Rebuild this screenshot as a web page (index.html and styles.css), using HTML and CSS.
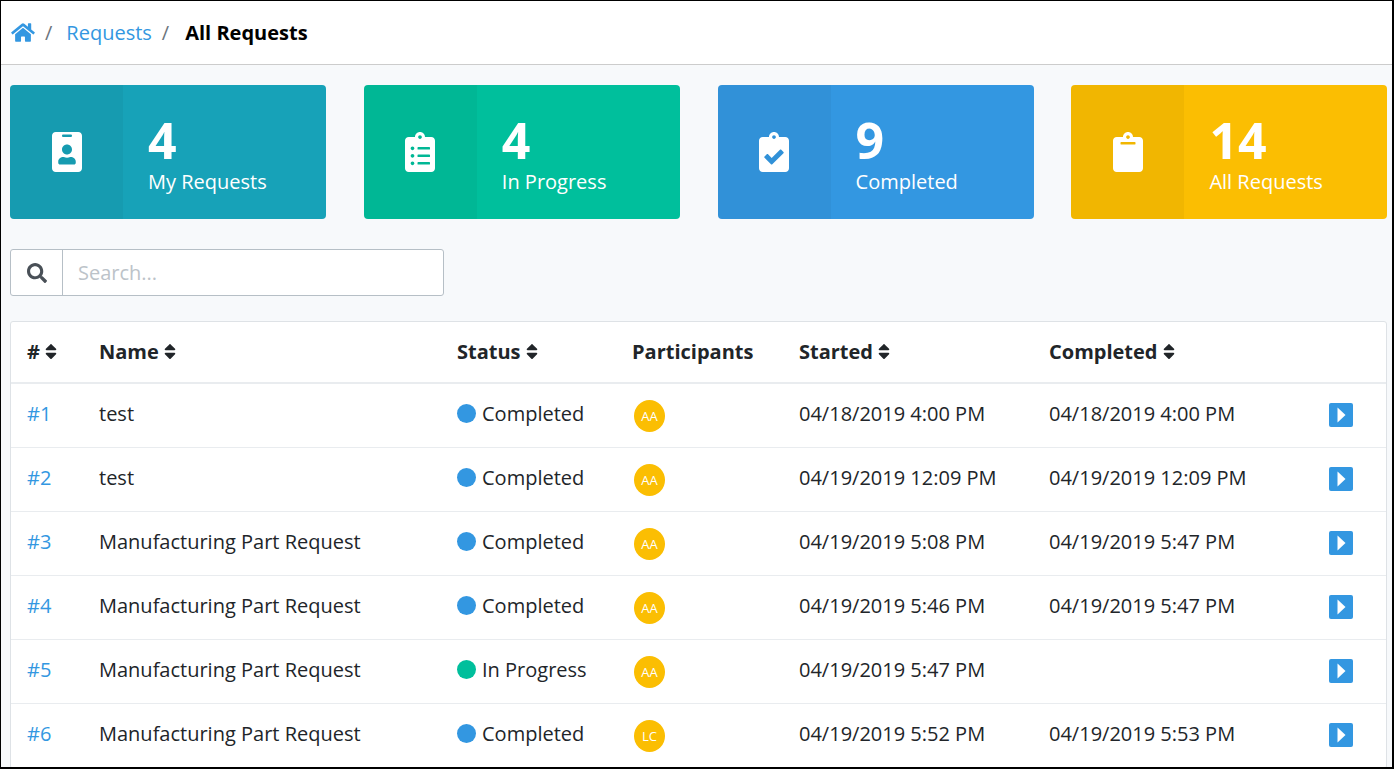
FILE: index.html
```html
<!DOCTYPE html>
<html>
<head>
    <meta charset="UTF-8">
    <title>All Requests</title>
    <link rel="stylesheet" href="styles.css">
</head>
<body>
<svg class="sprites" xmlns="http://www.w3.org/2000/svg">
    <symbol id="sort" viewBox="0 0 320 512"><path d="M41 288h238c21.4 0 32.1 25.9 17 41L177 448c-9.4 9.4-24.6 9.4-33.9 0L24 329c-15.1-15.1-4.4-41 17-41zm255-105L177 64c-9.4-9.4-24.6-9.4-33.9 0L24 183c-15.1 15.1-4.4 41 17 41h238c21.4 0 32.1-25.9 17-41z"/></symbol>
    <symbol id="play" viewBox="0 0 24 24"><rect width="24" height="24" rx="2" fill="#3397e1"/><path d="M8.500 4.500v15l8-7.500z" fill="#fff"/></symbol>
</svg>
<div class="frame">
    <nav class="crumbs">
        <svg class="home" viewBox="0 0 576 512"><path d="M280.37 148.26L96 300.11V464a16 16 0 0 0 16 16l112.06-.29a16 16 0 0 0 15.92-16V368a16 16 0 0 1 16-16h64a16 16 0 0 1 16 16v95.64a16 16 0 0 0 16 16.05L464 480a16 16 0 0 0 16-16V300L295.67 148.26a12.19 12.19 0 0 0-15.3 0zM571.6 251.47L488 182.56V44.05a12 12 0 0 0-12-12h-56a12 12 0 0 0-12 12v72.61L318.47 43a48 48 0 0 0-61 0L4.34 251.47a12 12 0 0 0-1.6 16.9l25.5 31A12 12 0 0 0 45.15 301l235.22-193.74a12.19 12.19 0 0 1 15.3 0L530.9 301a12 12 0 0 0 16.9-1.6l25.5-31a12 12 0 0 0-1.7-16.93z"/></svg>
        <span class="sep">/</span>
        <a class="crumb-link">Requests</a>
        <span class="sep">/</span>
        <strong class="crumb-now">All Requests</strong>
    </nav>

    <main class="content">
        <section class="cards">
            <div class="card card-teal">
                <div class="card-icon">
                    <svg viewBox="0 0 384 512"><path d="M336 0H48C21.5 0 0 21.500 0 48v416c0 26.500 21.500 48 48 48h288c26.500 0 48-21.500 48-48V48c0-26.500-21.500-48-48-48zM144 32h96c8.800 0 16 7.200 16 16s-7.200 16-16 16h-96c-8.800 0-16-7.200-16-16s7.200-16 16-16zm48 128c35.300 0 64 28.700 64 64s-28.700 64-64 64-64-28.700-64-64 28.700-64 64-64zm112 236.800c0 10.600-10 19.200-22.400 19.200H102.400C90 416 80 407.400 80 396.800v-19.200c0-31.800 30.100-57.600 67.200-57.600h5c12.300 5.100 25.700 8 39.800 8s27.600-2.900 39.800-8h5c37.100 0 67.200 25.800 67.200 57.600v19.200z"/></svg>
                </div>
                <div class="card-text"><b>4</b><span>My Requests</span></div>
            </div>
            <div class="card card-green">
                <div class="card-icon">
                    <svg viewBox="0 0 384 512"><path d="M336 64h-80c0-35.300-28.700-64-64-64s-64 28.700-64 64H48C21.500 64 0 85.500 0 112v352c0 26.500 21.500 48 48 48h288c26.500 0 48-21.500 48-48V112c0-26.500-21.500-48-48-48zM96 424c-13.300 0-24-10.700-24-24s10.700-24 24-24 24 10.700 24 24-10.700 24-24 24zm0-96c-13.300 0-24-10.700-24-24s10.700-24 24-24 24 10.700 24 24-10.700 24-24 24zm0-96c-13.300 0-24-10.700-24-24s10.700-24 24-24 24 10.700 24 24-10.700 24-24 24zm96-192c13.300 0 24 10.700 24 24s-10.700 24-24 24-24-10.700-24-24 10.700-24 24-24zm128 368c0 4.400-3.600 8-8 8H168c-4.400 0-8-3.600-8-8v-16c0-4.400 3.600-8 8-8h144c4.400 0 8 3.600 8 8v16zm0-96c0 4.400-3.600 8-8 8H168c-4.400 0-8-3.600-8-8v-16c0-4.400 3.600-8 8-8h144c4.400 0 8 3.600 8 8v16zm0-96c0 4.400-3.600 8-8 8H168c-4.400 0-8-3.600-8-8v-16c0-4.400 3.600-8 8-8h144c4.400 0 8 3.600 8 8v16z"/></svg>
                </div>
                <div class="card-text"><b>4</b><span>In Progress</span></div>
            </div>
            <div class="card card-blue">
                <div class="card-icon">
                    <svg viewBox="0 0 384 512"><path d="M336 64h-80c0-35.300-28.700-64-64-64s-64 28.700-64 64H48C21.500 64 0 85.500 0 112v352c0 26.500 21.500 48 48 48h288c26.500 0 48-21.500 48-48V112c0-26.500-21.500-48-48-48zM192 40c13.300 0 24 10.700 24 24s-10.700 24-24 24-24-10.700-24-24 10.700-24 24-24zm121.200 231.800l-143 141.800c-4.700 4.700-12.300 4.600-17-.1l-82.600-83.300c-4.700-4.700-4.600-12.300.1-17L99.100 285c4.700-4.700 12.300-4.600 17 .1l46 46.400 106-105.200c4.700-4.700 12.300-4.600 17 .1l28.200 28.400c4.700 4.800 4.600 12.300-.1 17z"/></svg>
                </div>
                <div class="card-text"><b>9</b><span>Completed</span></div>
            </div>
            <div class="card card-yellow">
                <div class="card-icon">
                    <svg viewBox="0 0 384 512"><path d="M384 112v352c0 26.510-21.490 48-48 48H48c-26.510 0-48-21.490-48-48V112c0-26.510 21.490-48 48-48h80c0-35.290 28.710-64 64-64s64 28.710 64 64h80c26.510 0 48 21.490 48 48zM192 40c-13.255 0-24 10.745-24 24s10.745 24 24 24 24-10.745 24-24-10.745-24-24-24m96 114v-20a6 6 0 0 0-6-6H102a6 6 0 0 0-6 6v20a6 6 0 0 0 6 6h180a6 6 0 0 0 6-6z"/></svg>
                </div>
                <div class="card-text"><b>14</b><span>All Requests</span></div>
            </div>
        </section>

        <div class="search">
            <div class="search-icon">
                <svg viewBox="0 0 512 512"><path d="M505 442.700L405.300 343c-4.500-4.500-10.600-7-17-7H372c27.600-35.300 44-79.700 44-128C416 93.100 322.900 0 208 0S0 93.100 0 208s93.100 208 208 208c48.300 0 92.700-16.400 128-44v16.300c0 6.400 2.500 12.500 7 17l99.700 99.700c9.400 9.400 24.600 9.400 33.900 0l28.300-28.300c9.400-9.400 9.400-24.600.1-34zM208 336c-70.700 0-128-57.200-128-128 0-70.700 57.200-128 128-128 70.700 0 128 57.200 128 128 0 70.700-57.200 128-128 128z"/></svg>
            </div>
            <input class="search-input" type="text" placeholder="Search...">
        </div>

        <div class="table-card">
            <table class="requests">
                <colgroup>
                    <col class="col-id"><col class="col-name"><col class="col-status"><col class="col-part"><col class="col-start"><col class="col-end"><col class="col-act">
                </colgroup>
                <tr>
                    <th># <svg class="sort"><use href="#sort"/></svg></th>
                    <th>Name <svg class="sort"><use href="#sort"/></svg></th>
                    <th>Status <svg class="sort"><use href="#sort"/></svg></th>
                    <th>Participants</th>
                    <th>Started <svg class="sort"><use href="#sort"/></svg></th>
                    <th>Completed <svg class="sort"><use href="#sort"/></svg></th>
                    <th></th>
                </tr>
                <tr>
                    <td><a class="req-link">#1</a></td>
                    <td>test</td>
                    <td><span class="dot dot-blue"></span>Completed</td>
                    <td><span class="avatar">AA</span></td>
                    <td>04/18/2019 4:00 PM</td>
                    <td>04/18/2019 4:00 PM</td>
                    <td><svg class="open"><use href="#play"/></svg></td>
                </tr>
                <tr>
                    <td><a class="req-link">#2</a></td>
                    <td>test</td>
                    <td><span class="dot dot-blue"></span>Completed</td>
                    <td><span class="avatar">AA</span></td>
                    <td>04/19/2019 12:09 PM</td>
                    <td>04/19/2019 12:09 PM</td>
                    <td><svg class="open"><use href="#play"/></svg></td>
                </tr>
                <tr>
                    <td><a class="req-link">#3</a></td>
                    <td>Manufacturing Part Request</td>
                    <td><span class="dot dot-blue"></span>Completed</td>
                    <td><span class="avatar">AA</span></td>
                    <td>04/19/2019 5:08 PM</td>
                    <td>04/19/2019 5:47 PM</td>
                    <td><svg class="open"><use href="#play"/></svg></td>
                </tr>
                <tr>
                    <td><a class="req-link">#4</a></td>
                    <td>Manufacturing Part Request</td>
                    <td><span class="dot dot-blue"></span>Completed</td>
                    <td><span class="avatar">AA</span></td>
                    <td>04/19/2019 5:46 PM</td>
                    <td>04/19/2019 5:47 PM</td>
                    <td><svg class="open"><use href="#play"/></svg></td>
                </tr>
                <tr>
                    <td><a class="req-link">#5</a></td>
                    <td>Manufacturing Part Request</td>
                    <td><span class="dot dot-green"></span>In Progress</td>
                    <td><span class="avatar">AA</span></td>
                    <td>04/19/2019 5:47 PM</td>
                    <td></td>
                    <td><svg class="open"><use href="#play"/></svg></td>
                </tr>
                <tr>
                    <td><a class="req-link">#6</a></td>
                    <td>Manufacturing Part Request</td>
                    <td><span class="dot dot-blue"></span>Completed</td>
                    <td><span class="avatar">LC</span></td>
                    <td>04/19/2019 5:52 PM</td>
                    <td>04/19/2019 5:53 PM</td>
                    <td><svg class="open"><use href="#play"/></svg></td>
                </tr>
            </table>
        </div>
    </main>
</div>
</body>
</html>
```

FILE: styles.css
```css
* {
    box-sizing: border-box;
}

html, body {
    margin: 0;
    height: 100%;
    overflow: hidden;
}

body {
    font-family: "Open Sans", sans-serif;
    font-size: 20px;
    color: #212529;
    background: #fff;
}

.sprites {
    display: none;
}

.frame {
    height: 769px;
    border: solid #000;
    border-width: 1px 2px 2px 1px;
    overflow: hidden;
    background: #f7f9fb;
}

/* breadcrumb bar */
.crumbs {
    height: 64px;
    padding-left: 10px;
    display: flex;
    align-items: center;
    background: #fff;
    border-bottom: 1px solid #ccc;
}

.home {
    width: 24px;
    height: 21px;
    fill: #3397e1;
}

.sep {
    color: #6c757d;
    margin: 0 14px 0 10px;
}

.sep + .crumb-now {
    margin-left: 2px;
}

.crumb-link {
    color: #3397e1;
}

.crumb-now {
    font-weight: 700;
    color: #000;
}

.content {
    padding: 20px 5px 0 9px;
}

/* counters */
.cards {
    display: grid;
    grid-template-columns: repeat(4, 316px);
    column-gap: 37.8px;
}

.card {
    height: 134px;
    display: flex;
    border-radius: 4px;
    overflow: hidden;
    color: #fff;
}

.card-icon {
    width: 113px;
    display: flex;
    align-items: center;
    justify-content: center;
    background: rgba(0, 0, 0, 0.04);
}

.card-icon svg {
    width: 32px;
    height: 40px;
    fill: #fff;
}

.card-text {
    padding-left: 25px;
    display: flex;
    flex-direction: column;
}

.card-text b {
    font-size: 50px;
    line-height: 56px;
    margin-top: 27px;
}

.card-text span {
    line-height: 28px;
}

.card-teal { background: #17a2b8; }
.card-green { background: #00bf9c; }
.card-blue { background: #3397e1; }
.card-yellow { background: #fbbe02; }

/* search */
.search {
    width: 434px;
    height: 47px;
    margin-top: 30px;
    display: flex;
    background: #fff;
    border: 1px solid #b6bfc6;
    border-radius: 3px;
}

.search-icon {
    width: 52px;
    display: flex;
    align-items: center;
    justify-content: center;
    border-right: 1px solid #b6bfc6;
}

.search-icon svg {
    width: 20px;
    height: 20px;
    fill: #495057;
}

.search-input {
    flex: 1;
    min-width: 0;
    border: 0;
    outline: 0;
    padding: 0 15px;
    font: inherit;
    background: transparent;
}

.search-input::placeholder {
    color: #bcc3c9;
}

/* table */
.table-card {
    margin-top: 25px;
    background: #fff;
    border: 1px solid #dee2e6;
    border-radius: 3px;
}

.requests {
    width: 100%;
    table-layout: fixed;
    border-collapse: separate;
    border-spacing: 0;
}

.col-id { width: 72px; }
.col-name { width: 358px; }
.col-status { width: 175px; }
.col-part { width: 167px; }
.col-start { width: 250px; }
.col-end { width: 280px; }

.requests th {
    height: 62px;
    padding: 0 0 2px 16px;
    text-align: left;
    font-weight: 700;
    font-size: 20px;
    white-space: nowrap;
    color: #212529;
    border-bottom: 2px solid #e9ecef;
}

.requests td {
    height: 64px;
    padding: 0 0 4px 16px;
    white-space: nowrap;
    border-bottom: 1px solid #e9ecef;
}

.sort {
    width: 12px;
    height: 19px;
    fill: #212529;
    vertical-align: -2px;
}

.req-link {
    color: #3397e1;
}

.dot {
    display: inline-block;
    width: 19px;
    height: 19px;
    margin-right: 6px;
    border-radius: 50%;
    vertical-align: -2px;
}

.dot-blue { background: #3397e1; }
.dot-green { background: #00bf9c; }

.avatar {
    display: inline-flex;
    align-items: center;
    justify-content: center;
    width: 31px;
    height: 32px;
    margin: 5px 0 0 2px;
    border-radius: 50%;
    font-size: 13px;
    font-weight: 500;
    color: #fff;
    background: #fbbe02;
    vertical-align: middle;
}

.open {
    display: block;
    width: 24px;
    height: 24px;
    margin-top: 3px;
}
```
